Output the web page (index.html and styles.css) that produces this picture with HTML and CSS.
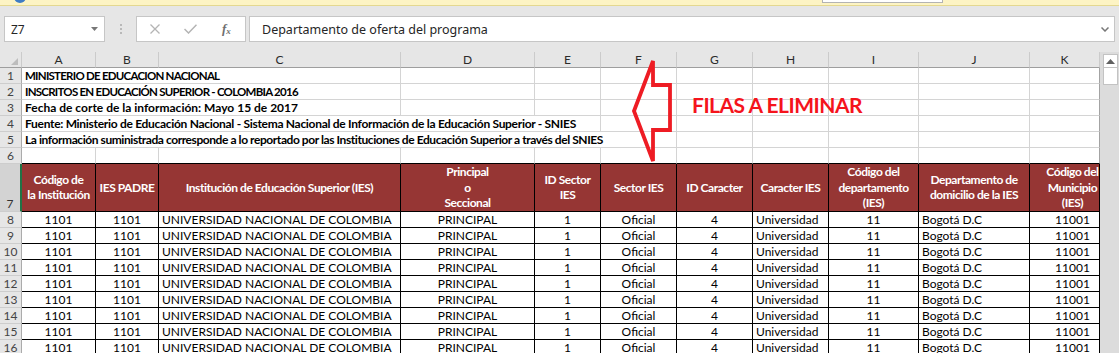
FILE: index.html
```html
<!DOCTYPE html>
<html lang="es">
<head>
  <meta charset="UTF-8" />
  <meta name="viewport" content="width=device-width, initial-scale=1.0"/>
  <title>Inscritos en Educación Superior 2016</title>
  <link rel="stylesheet" href="styles.css">
</head>
<body>
  <div class="notice-bar">
    <span class="notice-icon"></span>
    <span class="notice-button"></span>
  </div>

  <div class="formula-bar">
    <div class="name-box">
      <span>Z7</span>
      <svg class="caret" width="7" height="4" viewBox="0 0 7 4"><path d="M0 0H7L3.5 4Z" fill="#777"/></svg>
    </div>
    <div class="grip">
      <svg width="2" height="10" viewBox="0 0 2 10"><rect y="0" width="2" height="2"/><rect y="4" width="2" height="2"/><rect y="8" width="2" height="2"/></svg>
    </div>
    <div class="fx-box">
      <svg width="10" height="10" viewBox="0 0 10 10"><path d="M0.5 0.5L9.5 9.5M9.5 0.5L0.5 9.5" stroke="#b4b4b4" stroke-width="1.3"/></svg>
      <svg width="13" height="10" viewBox="0 0 13 10"><path d="M0.5 5L4.5 9L12.5 0.8" stroke="#b4b4b4" stroke-width="1.5" fill="none"/></svg>
      <span class="fx">f<sub>x</sub></span>
    </div>
    <div class="formula-input">
      <span>Departamento de oferta del programa</span>
      <svg width="8" height="5" viewBox="0 0 8 5"><path d="M0.5 0.5L4 4L7.5 0.5" stroke="#777" stroke-width="1.5" fill="none"/></svg>
    </div>
  </div>

  <div class="sheet">
    <div class="grid-wrap">
      <table class="grid">
        <colgroup>
          <col style="width:22px"><col style="width:74px"><col style="width:63px"><col style="width:242px">
          <col style="width:134px"><col style="width:66px"><col style="width:76px"><col style="width:76px">
          <col style="width:76px"><col style="width:90px"><col style="width:111px"><col style="width:70px">
        </colgroup>
        <thead>
          <tr class="col-heads">
            <th class="corner"><svg width="7" height="7" viewBox="0 0 7 7"><path d="M7 0V7H0Z" fill="#bdbdbd"/></svg></th>
            <th>A</th><th>B</th><th>C</th><th>D</th><th>E</th><th>F</th><th>G</th><th>H</th><th>I</th><th>J</th><th>K</th>
          </tr>
        </thead>
        <tbody>
          <tr class="light"><th>1</th><td colspan="3" class="title caps">MINISTERIO DE EDUCACION NACIONAL</td><td></td><td></td><td></td><td></td><td></td><td></td><td></td><td></td></tr>
          <tr class="light"><th>2</th><td colspan="3" class="title caps">INSCRITOS EN EDUCACIÓN SUPERIOR - COLOMBIA 2016</td><td></td><td></td><td></td><td></td><td></td><td></td><td></td><td></td></tr>
          <tr class="light"><th>3</th><td colspan="3" class="title">Fecha de corte de la información: Mayo 15 de 2017</td><td></td><td></td><td></td><td></td><td></td><td></td><td></td><td></td></tr>
          <tr class="light"><th>4</th><td colspan="5" class="title mid">Fuente: Ministerio de Educación Nacional - Sistema Nacional de Información de la Educación Superior - SNIES</td><td></td><td></td><td></td><td></td><td></td><td></td></tr>
          <tr class="light"><th>5</th><td colspan="6" class="title long">La información suministrada corresponde a lo reportado por las Instituciones de Educación Superior a través del SNIES</td><td></td><td></td><td></td><td></td><td></td></tr>
          <tr class="light before-head"><th>6</th><td></td><td></td><td></td><td></td><td></td><td></td><td></td><td></td><td></td><td></td><td></td></tr>
          <tr class="head">
            <th class="selected">7</th>
            <td>Código de<br>la Institución</td>
            <td>IES PADRE</td>
            <td>Institución de Educación Superior (IES)</td>
            <td>Principal<br>o<br>Seccional</td>
            <td>ID Sector<br>IES</td>
            <td>Sector IES</td>
            <td>ID Caracter</td>
            <td>Caracter IES</td>
            <td>Código del<br>departamento<br>(IES)</td>
            <td>Departamento de<br>domicilio de la IES</td>
            <td class="k">Código del<br>Municipio<br>(IES)</td>
          </tr>
          <tr class="data"><th>8</th><td class="c">1101</td><td class="c">1101</td><td>UNIVERSIDAD NACIONAL DE COLOMBIA</td><td class="c">PRINCIPAL</td><td class="c">1</td><td class="c">Oficial</td><td class="c">4</td><td>Universidad</td><td class="c">11</td><td>Bogotá D.C</td><td class="c k">11001</td></tr>
          <tr class="data"><th>9</th><td class="c">1101</td><td class="c">1101</td><td>UNIVERSIDAD NACIONAL DE COLOMBIA</td><td class="c">PRINCIPAL</td><td class="c">1</td><td class="c">Oficial</td><td class="c">4</td><td>Universidad</td><td class="c">11</td><td>Bogotá D.C</td><td class="c k">11001</td></tr>
          <tr class="data"><th>10</th><td class="c">1101</td><td class="c">1101</td><td>UNIVERSIDAD NACIONAL DE COLOMBIA</td><td class="c">PRINCIPAL</td><td class="c">1</td><td class="c">Oficial</td><td class="c">4</td><td>Universidad</td><td class="c">11</td><td>Bogotá D.C</td><td class="c k">11001</td></tr>
          <tr class="data"><th>11</th><td class="c">1101</td><td class="c">1101</td><td>UNIVERSIDAD NACIONAL DE COLOMBIA</td><td class="c">PRINCIPAL</td><td class="c">1</td><td class="c">Oficial</td><td class="c">4</td><td>Universidad</td><td class="c">11</td><td>Bogotá D.C</td><td class="c k">11001</td></tr>
          <tr class="data"><th>12</th><td class="c">1101</td><td class="c">1101</td><td>UNIVERSIDAD NACIONAL DE COLOMBIA</td><td class="c">PRINCIPAL</td><td class="c">1</td><td class="c">Oficial</td><td class="c">4</td><td>Universidad</td><td class="c">11</td><td>Bogotá D.C</td><td class="c k">11001</td></tr>
          <tr class="data"><th>13</th><td class="c">1101</td><td class="c">1101</td><td>UNIVERSIDAD NACIONAL DE COLOMBIA</td><td class="c">PRINCIPAL</td><td class="c">1</td><td class="c">Oficial</td><td class="c">4</td><td>Universidad</td><td class="c">11</td><td>Bogotá D.C</td><td class="c k">11001</td></tr>
          <tr class="data"><th>14</th><td class="c">1101</td><td class="c">1101</td><td>UNIVERSIDAD NACIONAL DE COLOMBIA</td><td class="c">PRINCIPAL</td><td class="c">1</td><td class="c">Oficial</td><td class="c">4</td><td>Universidad</td><td class="c">11</td><td>Bogotá D.C</td><td class="c k">11001</td></tr>
          <tr class="data"><th>15</th><td class="c">1101</td><td class="c">1101</td><td>UNIVERSIDAD NACIONAL DE COLOMBIA</td><td class="c">PRINCIPAL</td><td class="c">1</td><td class="c">Oficial</td><td class="c">4</td><td>Universidad</td><td class="c">11</td><td>Bogotá D.C</td><td class="c k">11001</td></tr>
          <tr class="data"><th>16</th><td class="c">1101</td><td class="c">1101</td><td>UNIVERSIDAD NACIONAL DE COLOMBIA</td><td class="c">PRINCIPAL</td><td class="c">1</td><td class="c">Oficial</td><td class="c">4</td><td>Universidad</td><td class="c">11</td><td>Bogotá D.C</td><td class="c k">11001</td></tr>
        </tbody>
      </table>

      <!-- note drawn over the first rows -->
      <svg class="arrow" width="48" height="112" viewBox="0 0 48 112">
        <path d="M6 55L25 5V29H42V74H25V105Z" fill="none" stroke="#ee1c24" stroke-width="3.8"/>
      </svg>
      <div class="note">FILAS A ELIMINAR</div>
    </div>

    <div class="vscroll">
      <div class="vs-up">
        <svg width="9" height="5" viewBox="0 0 9 5"><path d="M0 5L4.5 0L9 5Z" fill="#606060"/></svg>
      </div>
      <div class="vs-thumb"></div>
    </div>
  </div>
</body>
</html>
```

FILE: styles.css
```css
html, body {
  margin: 0;
  padding: 0;
  height: 100%;
  overflow: hidden;
  background: #e6e6e6;
  font-family: Lato, "Liberation Sans", sans-serif;
}

.notice-bar {
  display: flex;
  align-items: flex-end;
  height: 5px;
  overflow: hidden;
  background: #fdf4c4;
  border-bottom: 1px solid #e4d890;
}

.notice-icon {
  flex: none;
  width: 12px;
  height: 12px;
  margin: 0 0 2px 14px;
  border-radius: 50%;
  background: #3f7cc4;
}

.notice-button {
  flex: none;
  width: 119px;
  height: 20px;
  margin: 0 0 2px 796px;
  background: #fff;
  border: 1px solid #b3b3b3;
}

.formula-bar {
  display: flex;
  align-items: center;
  height: 26px;
  padding: 10px 4px;
  font-family: "Noto Sans", "Open Sans", sans-serif;
  font-size: 12px;
  color: #262626;
}

.name-box {
  box-sizing: border-box;
  display: flex;
  align-items: center;
  justify-content: space-between;
  width: 101px;
  height: 26px;
  padding: 0 6px 0 6px;
  background: #fff;
  border: 1px solid #c6c6c6;
}

.grip {
  display: flex;
  justify-content: center;
  width: 31px;
  fill: #b9b9b9;
}

.fx-box {
  box-sizing: border-box;
  display: flex;
  align-items: center;
  width: 110px;
  height: 26px;
  padding-left: 13px;
  gap: 24px;
  background: #fff;
  border: 1px solid #c6c6c6;
}

.fx {
  margin-left: 1px;
  font-family: "Liberation Serif", "DejaVu Serif", serif;
  font-style: italic;
  font-weight: bold;
  font-size: 13px;
  color: #6f6f6f;
}

.fx sub {
  font-size: 9px;
  vertical-align: -1px;
}

.formula-input {
  box-sizing: border-box;
  display: flex;
  align-items: center;
  justify-content: space-between;
  flex: 1;
  height: 26px;
  margin-left: 3px;
  padding: 0 5px 0 12px;
  background: #fff;
  border: 1px solid #c6c6c6;
  font-size: 12.5px;
}

.sheet {
  display: flex;
}

.grid-wrap {
  position: relative;
  width: 1100px;
  flex: none;
  background: #fff;
}

.grid {
  table-layout: fixed;
  width: 1100px;
  border-collapse: separate;
  border-spacing: 0;
  font-size: 12px;
  color: #000;
}

.grid tr {
  height: 16px;
}

.grid th,
.grid td {
  padding: 0 3px;
  white-space: nowrap;
  line-height: 15px;
  border-right: 1px solid #d4d4d4;
  border-bottom: 1px solid #d4d4d4;
  text-align: left;
  vertical-align: middle;
}

.grid tbody th {
  padding: 0;
  text-align: center;
  font-weight: normal;
  color: #444;
  background: #e6e6e6;
  border-right-color: #ababab;
  border-bottom-color: #cdcdcd;
}

.col-heads th {
  padding: 0;
  text-align: center;
  font-weight: normal;
  color: #2b2b2b;
  background: #e6e6e6;
  border-right-color: #cbcbcb;
  border-bottom-color: #9e9e9e;
}

.col-heads .corner {
  text-align: right;
  vertical-align: bottom;
  padding: 0 3px 2px 0;
  line-height: 0;
}

.title {
  font-weight: bold;
}

.title.caps {
  font-size: 11.5px;
  letter-spacing: -0.75px;
}

.title.mid {
  letter-spacing: -0.3px;
}

.title.long {
  letter-spacing: -0.43px;
}

.light td:last-child {
  border-right-color: #a3a3a3;
}

.before-head td {
  border-bottom-color: #000;
}

.head {
  height: 48px;
}

.head td {
  padding: 0 2px;
  text-align: center;
  line-height: 15.6px;
  font-weight: bold;
  letter-spacing: -0.45px;
  color: #fff;
  background: #963634;
  border-right-color: #000;
  border-bottom-color: #000;
}

.grid .head th.selected {
  vertical-align: bottom;
  background: #d3d3d3;
  color: #333;
  border-right: 2px solid #217346;
}

.data td {
  border-right-color: #000;
  border-bottom-color: #000;
}

.data td.c {
  text-align: center;
}

.grid td.k {
  padding: 0 0 0 16px;
}

.arrow {
  position: absolute;
  left: 628px;
  top: 4px;
}

.note {
  position: absolute;
  left: 692px;
  top: 42px;
  font-size: 21px;
  line-height: 22px;
  font-weight: bold;
  letter-spacing: -0.5px;
  color: #f5141c;
  white-space: nowrap;
}

.vscroll {
  flex: 1;
  display: flex;
  flex-direction: column;
  align-items: flex-start;
  padding: 2px 0 0 3px;
  height: 320px;
  background: #dcdcdc;
}

.vs-up {
  box-sizing: border-box;
  display: flex;
  align-items: center;
  justify-content: center;
  width: 15px;
  height: 14px;
  background: #fff;
  border: 1px solid #c3c3c3;
}

.vs-thumb {
  box-sizing: border-box;
  width: 15px;
  height: 17px;
  background: #fff;
  border: 1px solid #c3c3c3;
  border-top: none;
}
```
